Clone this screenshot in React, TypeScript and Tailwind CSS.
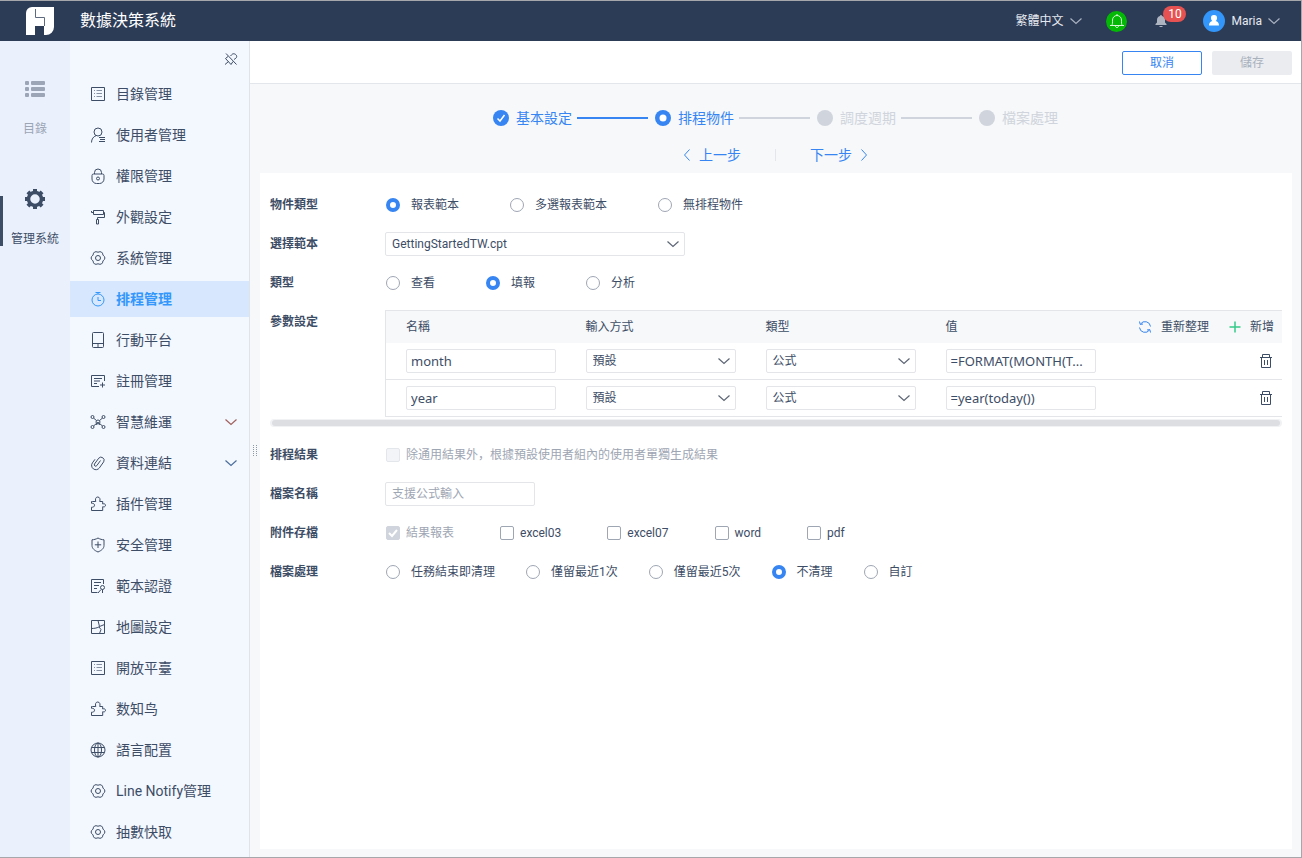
import { useState } from "react";
import type { ReactNode } from "react";
import clsx from "clsx";

type IconName =
  | "list"
  | "user"
  | "lock"
  | "roller"
  | "gear"
  | "timer"
  | "phone"
  | "register"
  | "network"
  | "clip"
  | "puzzle"
  | "shield"
  | "certificate"
  | "map"
  | "globe";

const iconShapes: Record<IconName, ReactNode> = {
  list: (
    <>
      <path d="M1.5 1.5h13v13h-13z" />
      <path opacity=".6" d="M4 4.5h1M4 7.5h1M4 10.5h1M6.5 4.5H12M6.5 7.5H12M6.5 10.5H12" />
    </>
  ),
  user: (
    <>
      <circle cx="8" cy="5" r="4" />
      <path d="M1.5 15.5c0-3.500 2-6 4.500-6.800M9 10.500h6M10 12.500h5M9 14.500h6" />
    </>
  ),
  lock: (
    <>
      <path d="M4.500 6V4.500a3.500 3.500 0 0 1 7 0V6M3.500 6h9a1.500 1.500 0 0 1 1.500 1.500V11a4.500 4.500 0 0 1-4.500 4.500h-3A4.500 4.500 0 0 1 2 11V7.500A1.500 1.500 0 0 1 3.500 6z" />
      <circle cx="8" cy="10.500" r="1.500" />
    </>
  ),
  roller: (
    <path d="M3.500 1.500h10v4h-10zM3.500 3.500h-2V2M13.500 3.500h1v5h-7v2M6.500 10.500h2v4.500h-2z" />
  ),
  gear: (
    <>
      <path
        strokeLinejoin="round"
        d="M8 2.200Q12.400.4 13 5.100 16.800 8 13 10.900 12.400 15.600 8 13.800 3.600 15.600 3 10.900-.8 8 3 5.100 3.600.4 8 2.200z"
      />
      <circle cx="8" cy="8" r="2.500" />
    </>
  ),
  timer: (
    <>
      <path d="M5.500 1.500h5M8 1.500V3M8 6v3.500h3" />
      <circle cx="8" cy="9" r="6" />
    </>
  ),
  phone: (
    <path d="M3.500 .5h9a1 1 0 0 1 1 1v13a1 1 0 0 1-1 1h-9a1 1 0 0 1-1-1v-13a1 1 0 0 1 1-1zM2.500 11.500h11M8 12v3.500" />
  ),
  register: (
    <path d="M14.500 8V2.500h-13v11H9M4 5.500h8M4 8h6M4 10.500h3M12.500 9.500v5M10 12h5" />
  ),
  network: (
    <>
      <circle cx="2.500" cy="3" r="1.500" />
      <circle cx="13.500" cy="3" r="1.500" />
      <circle cx="2.500" cy="13" r="1.500" />
      <circle cx="13.500" cy="13" r="1.500" />
      <circle cx="8" cy="8" r="2" />
      <path d="m3.500 4 3 2.600M12.500 4l-3 2.600M3.500 12l3-2.600M12.500 12l-3-2.600M6 11l2-3 2 3" />
    </>
  ),
  clip: (
    <path d="M10.500 5.500 6.800 10.600a1.400 1.400 0 0 1-2.300-1.600L8.700 3.200a3.100 3.100 0 0 1 5 3.600L9.400 12.900a4.300 4.300 0 0 1-7-5L5 4.300" />
  ),
  puzzle: (
    <path d="M2.500 5.500h3.300C5 3.500 5.500 1 7.700 1s2.800 2.500 2 4.500h3V8c1.500-.6 2.800 0 2.800 1.300s-1.300 1.900-2.800 1.400v3.800H1.500v-3.300c1.800.2 3-.5 3-2s-1.200-2-3-1.900V5.500z" />
  ),
  shield: (
    <path d="M8 1c2 1.200 4 1.700 6 1.800v5.700c0 3-2.500 5-6 6.500-3.500-1.500-6-3.500-6-6.500V2.800C4 2.700 6 2.200 8 1zM8 4.500v6.500M4.800 7.800h6.400" />
  ),
  certificate: (
    <>
      <path d="M13.500 6V1.500h-12v13h6M4 4.500h7M4 7.500h5M4 10.500h3M11 11.500l-3 3.500M12.500 11.500V15" />
      <circle cx="12.500" cy="9.500" r="2" />
    </>
  ),
  map: (
    <path d="M1.500 1.500h13v13h-13zM8 1.500l1.500 6M9.500 7.500l5-2M1.500 9.500c3 0 6-.5 8-2M9 8l2 2.500-1.500 4" />
  ),
  globe: (
    <>
      <circle cx="8" cy="8" r="7" />
      <ellipse cx="8" cy="8" rx="3.500" ry="7" />
      <path d="M8 1v14M1.500 5.500h13M1.500 10.500h13" />
    </>
  ),
};

const menuItems: { label: string; icon: IconName; expandable?: string }[] = [
  { label: "目錄管理", icon: "list" },
  { label: "使用者管理", icon: "user" },
  { label: "權限管理", icon: "lock" },
  { label: "外觀設定", icon: "roller" },
  { label: "系統管理", icon: "gear" },
  { label: "排程管理", icon: "timer" },
  { label: "行動平台", icon: "phone" },
  { label: "註冊管理", icon: "register" },
  { label: "智慧維運", icon: "network", expandable: "text-[#a0605c]" },
  { label: "資料連結", icon: "clip", expandable: "text-[#4a6f9c]" },
  { label: "插件管理", icon: "puzzle" },
  { label: "安全管理", icon: "shield" },
  { label: "範本認證", icon: "certificate" },
  { label: "地圖設定", icon: "map" },
  { label: "開放平臺", icon: "list" },
  { label: "数知鸟", icon: "puzzle" },
  { label: "語言配置", icon: "globe" },
  { label: "Line Notify管理", icon: "gear" },
  { label: "抽數快取", icon: "gear" },
];

const steps = [
  { label: "基本設定", state: "done" },
  { label: "排程物件", state: "current" },
  { label: "調度週期", state: "todo" },
  { label: "檔案處理", state: "todo" },
];

const params = [
  { name: "month", value: "=FORMAT(MONTH(T..." },
  { name: "year", value: "=year(today())" },
];

function Icon({ name }: { name: IconName }) {
  return (
    <svg className="size-4 shrink-0" viewBox="0 0 16 16" fill="none" stroke="currentColor" aria-hidden="true">
      {iconShapes[name]}
    </svg>
  );
}

function ChevronDown({ className }: { className?: string }) {
  return (
    <svg
      className={clsx("h-2 w-3 shrink-0", className)}
      viewBox="0 0 12 8"
      fill="none"
      stroke="currentColor"
      strokeWidth="1.2"
      aria-hidden="true"
    >
      <path d="M.5 1.500 6 6.500l5.500-5" />
    </svg>
  );
}

function Header() {
  return (
    <header className="flex h-10 shrink-0 items-center bg-[#2c3b56] pr-[21px] pl-[26px] text-white">
      <svg className="size-7" viewBox="0 0 28 28" aria-hidden="true">
        <path fill="#fff" d="M6 0h22v20a8 8 0 0 1-8 8h-2v-9H9v9H0V6a6 6 0 0 1 6-6z" />
        <path fill="none" stroke="#5d6a80" d="M9.500 2v8.500h9V19" />
      </svg>
      <h1 className="ml-[26px] text-base">數據決策系統</h1>
      <div className="ml-auto flex items-center text-xs text-[#e6eaf0]">
        <button type="button" className="flex items-center gap-[7px]">
          繁體中文
          <ChevronDown className="text-[#a9b2c0]" />
        </button>
        <button
          type="button"
          aria-label="客服"
          className="ml-6 flex size-[21px] items-center justify-center rounded-full bg-[#04b806]"
        >
          <svg className="size-4" viewBox="0 0 16 16" fill="none" stroke="#d9f7d9" aria-hidden="true">
            <path d="M1 12.500h14M2.500 12.500c1.200-1 1-3 1-5.500a4.500 4.500 0 0 1 9 0c0 2.500-.2 4.500 1 5.500M8 1v1.500M6.500 13c0 2 3 2 3 0" />
          </svg>
        </button>
        <button type="button" aria-label="通知" className="relative ml-7 flex size-3 items-center justify-center">
          <svg className="size-3 text-[#aeb5c1]" viewBox="0 0 12 12" fill="currentColor" aria-hidden="true">
            <path d="M6 0a1 1 0 0 1 1 1c2 .5 3 2 3 4v2.500L11.500 9v1H.5V9L2 7.500V5c0-2 1-3.500 3-4a1 1 0 0 1 1-1zM4.500 11h3v1h-3z" />
          </svg>
          <span className="absolute -top-[9px] left-2 h-4 w-[23px] rounded-full bg-[#e65251] text-center text-xs leading-4 text-white">
            10
          </span>
        </button>
        <button type="button" className="ml-9 flex items-center gap-[6px]">
          <svg className="size-[22px]" viewBox="0 0 22 22" aria-hidden="true">
            <circle cx="11" cy="11" r="11" fill="#3296fa" />
            <path
              fill="#fff"
              d="M11 5a3 3 0 0 1 3 3.200c0 1.200-.5 2.200-1.300 2.800 2 .6 3.300 1.700 3.300 4.500H6c0-2.800 1.300-3.900 3.300-4.500A3.500 3.500 0 0 1 8 8.200 3 3 0 0 1 11 5z"
            />
          </svg>
          Maria
          <ChevronDown className="text-[#a9b2c0]" />
        </button>
      </div>
    </header>
  );
}

function Rail() {
  return (
    <nav className="w-[70px] shrink-0 bg-[#eaf1fd] pt-[22px] text-xs">
      <a href="#catalog" className="flex h-[110px] flex-col items-center gap-[22px] pt-4 text-[#9ca5b5]">
        <svg className="h-5 w-5" viewBox="0 0 20 20" fill="currentColor" aria-hidden="true">
          <rect y="2" width="4" height="4" rx="1" />
          <rect y="8" width="4" height="4" rx="1" />
          <rect y="14" width="4" height="4" rx="1" />
          <rect x="6" y="2" width="14" height="4" rx="1" />
          <rect x="6" y="8" width="14" height="4" rx="1" />
          <rect x="6" y="14" width="14" height="4" rx="1" />
        </svg>
        <span className="leading-4">目錄</span>
      </a>
      <a href="#system" className="relative flex h-[110px] flex-col items-center gap-[22px] pt-4 text-[#3d4d66]">
        <span className="absolute top-[23px] left-0 h-[50px] w-[3px] bg-[#3d4d66]" />
        <svg className="size-5" viewBox="0 0 20 20" fill="none" stroke="currentColor" aria-hidden="true">
          <circle cx="10" cy="10" r="6.500" strokeWidth="3.500" />
          <path
            strokeWidth="4"
            d="M10 0v3M10 17v3M0 10h3M17 10h3M2.900 2.900 5 5M15 15l2.100 2.100M2.900 17.100 5 15M15 5l2.100-2.100"
          />
        </svg>
        <span className="leading-4">管理系統</span>
      </a>
    </nav>
  );
}

function Sidebar() {
  return (
    <nav className="w-[180px] shrink-0 border-r border-[#dfe3ea] bg-[#f3f7fe] text-sm text-[#3d4d66]">
      <div className="flex h-[35px] items-center justify-end pr-[11px]">
        <button type="button" aria-label="取消固定">
          <svg className="size-[14px]" viewBox="0 0 14 14" fill="none" stroke="currentColor" aria-hidden="true">
            <path d="m2 1.500 10.500 11M6.500 4l1.200-1.300c1.500-2 5-.5 5 1.800 0 1.500-1.500 2.200-2.700 3M4 4.500 1.500 6.500l5.500 6 2-3M4.500 9.500l-3.500 3" />
          </svg>
        </button>
      </div>
      <ul className="flex flex-col gap-[5px]">
        {menuItems.map(({ label, icon, expandable }) => (
          <li key={label}>
            <a
              href={`#${icon}`}
              className={clsx(
                "flex h-9 items-center gap-[10px] pr-3 pl-5",
                label === "排程管理" && "bg-[#d7e7fe] font-bold text-[#3397fb]"
              )}
            >
              <Icon name={icon} />
              <span>{label}</span>
              {expandable && <ChevronDown className={clsx("ml-auto", expandable)} />}
            </a>
          </li>
        ))}
      </ul>
    </nav>
  );
}

function Stepper() {
  return (
    <ol className="flex justify-center pt-6 text-sm leading-5">
      {steps.map(({ label, state }, index) => (
        <li
          key={label}
          className={clsx("flex items-center", state === "todo" ? "text-[#d0d4dc]" : "text-[#3685f2]")}
        >
          <svg className="mr-[7px] size-4" viewBox="0 0 16 16" aria-hidden="true">
            <circle cx="8" cy="8" r="8" fill="currentColor" />
            {state === "done" && <path d="m4.500 8.500 2.500 2.500 4.500-6" fill="none" stroke="#fff" strokeWidth="1.500" />}
            {state === "current" && <circle cx="8" cy="8" r="3.500" fill="#fff" />}
          </svg>
          {label}
          {index < steps.length - 1 && (
            <span
              className={clsx(
                "mr-[7px] ml-[5px] h-[2px] w-[71px]",
                state === "done" ? "bg-[#3685f2]" : "bg-[#d0d4dc]"
              )}
            />
          )}
        </li>
      ))}
    </ol>
  );
}

function StepNav() {
  return (
    <div className="flex items-center justify-center pt-[17px] pb-2 text-sm leading-5 text-[#3685f2]">
      <button type="button" className="flex items-center gap-2">
        <svg className="h-3 w-2" viewBox="0 0 8 12" fill="none" stroke="currentColor" aria-hidden="true">
          <path d="M6.500 .5 1.500 6l5 5.500" />
        </svg>
        上一步
      </button>
      <span className="mx-[34px] h-3 w-px bg-[#e3e6eb]" />
      <button type="button" className="flex items-center gap-2">
        下一步
        <svg className="h-3 w-2" viewBox="0 0 8 12" fill="none" stroke="currentColor" aria-hidden="true">
          <path d="m1.500 .5 5 5.500-5 5.500" />
        </svg>
      </button>
    </div>
  );
}

function FormRow({ label, children }: { label: string; children: ReactNode }) {
  return (
    <div role="group" aria-label={label} className="flex min-h-6">
      <span className="w-[115px] shrink-0 font-bold leading-6">{label}</span>
      <div className="flex min-w-0 flex-1 flex-wrap items-center">{children}</div>
    </div>
  );
}

function RadioGroup({
  name,
  options,
  initial,
  className,
}: {
  name: string;
  options: string[];
  initial: string;
  className: string;
}) {
  const [value, setValue] = useState(initial);

  return (
    <div className={clsx("flex flex-wrap pl-px", className)}>
      {options.map((option) => (
        <label key={option} className="flex items-center gap-[11px]">
          <input
            type="radio"
            name={name}
            checked={value === option}
            onChange={() => setValue(option)}
            className="size-[14px] appearance-none rounded-full border border-[#9ea6b3] bg-white checked:border-4 checked:border-[#3685f2]"
          />
          {option}
        </label>
      ))}
    </div>
  );
}

function Checkbox({ label, checked, disabled }: { label: string; checked?: boolean; disabled?: boolean }) {
  return (
    <label className={clsx("flex items-center gap-[6px]", disabled && "text-[#9ea6b3]")}>
      <span className="relative flex">
        <input
          type="checkbox"
          defaultChecked={checked}
          disabled={disabled}
          className="peer size-[14px] appearance-none rounded-[2px] border border-[#9ea6b3] bg-white checked:border-[#3685f2] checked:bg-[#3685f2] disabled:border-[#e3e6eb] disabled:bg-[#f2f4f7] disabled:checked:border-[#d0d4dc] disabled:checked:bg-[#d0d4dc]"
        />
        <svg
          className="pointer-events-none absolute inset-0 hidden size-[14px] peer-checked:block"
          viewBox="0 0 14 14"
          fill="none"
          stroke="#fff"
          strokeWidth="2"
          aria-hidden="true"
        >
          <path d="m3 7 3 3 5-6" />
        </svg>
      </span>
      {label}
    </label>
  );
}

function SelectBox({ label, value, className }: { label: string; value: string; className: string }) {
  return (
    <span className={clsx("relative flex items-center", className)}>
      <select
        aria-label={label}
        className="h-6 w-full appearance-none rounded-[2px] border border-[#e3e5e9] bg-white pr-6 pl-[6px]"
      >
        <option>{value}</option>
      </select>
      <ChevronDown className="pointer-events-none absolute right-[6px] text-[#5d6675]" />
    </span>
  );
}

function ParamTable() {
  const inputClass =
    "block h-6 w-[150px] rounded-[2px] border border-[#e3e5e9] bg-white px-1 font-['Noto_Sans',sans-serif] text-[13px]";

  return (
    <table className="w-full table-fixed border border-r-0 border-[#e3e5e9]">
      <thead>
        <tr className="h-8 bg-[#f6f8fa] text-left">
          <th className="w-[180px] pl-5 font-normal">名稱</th>
          <th className="w-[180px] pl-5 font-normal">輸入方式</th>
          <th className="w-[180px] pl-5 font-normal">類型</th>
          <th className="w-[180px] pl-5 font-normal">值</th>
          <th className="pr-2 font-normal">
            <div className="flex justify-end gap-5">
              <button type="button" className="flex items-center gap-[9px]">
                <svg
                  className="size-[14px] text-[#3685f2]"
                  viewBox="0 0 14 14"
                  fill="none"
                  stroke="currentColor"
                  aria-hidden="true"
                >
                  <path d="M2.500 4A5.500 5.500 0 0 1 12.500 6.500M11.500 10A5.500 5.500 0 0 1 1.500 7.500" />
                  <path d="M1.500 1.500 2.200 4.400 5 4M12.500 12.500l-.7-2.900L9 10" />
                </svg>
                重新整理
              </button>
              <button type="button" className="flex items-center gap-[9px]">
                <svg
                  className="size-3 text-[#36c98a]"
                  viewBox="0 0 12 12"
                  fill="none"
                  stroke="currentColor"
                  aria-hidden="true"
                >
                  <path d="M6 .5v11M.5 6h11" strokeWidth="1.500" />
                </svg>
                新增
              </button>
            </div>
          </th>
        </tr>
      </thead>
      <tbody>
        {params.map(({ name, value }) => (
          <tr key={name} className="h-[37px] border-b border-[#e3e5e9]">
            <td className="pl-5">
              <input aria-label="名稱" defaultValue={name} className={inputClass} />
            </td>
            <td className="pl-5">
              <SelectBox label="輸入方式" value="預設" className="w-[150px]" />
            </td>
            <td className="pl-5">
              <SelectBox label="類型" value="公式" className="w-[150px]" />
            </td>
            <td className="pl-5">
              <input aria-label="值" defaultValue={value} className={inputClass} />
            </td>
            <td className="pr-[10px]">
              <button type="button" aria-label="刪除" className="ml-auto block">
                <svg
                  className="h-[14px] w-3"
                  viewBox="0 0 12 14"
                  fill="none"
                  stroke="currentColor"
                  aria-hidden="true"
                >
                  <path d="M0 3.500h12M2.500 3.500v-3h7v3M1.500 3.500v10h9v-10M4.500 6v5M7.500 6v5" />
                </svg>
              </button>
            </td>
          </tr>
        ))}
      </tbody>
    </table>
  );
}

function ScheduleForm() {
  return (
    <form className="flex-1 bg-white px-[10px] pt-5 pb-6 text-xs leading-4">
      <div className="flex flex-col gap-[15px]">
        <FormRow label="物件類型">
          <RadioGroup
            name="objectType"
            options={["報表範本", "多選報表範本", "無排程物件"]}
            initial="報表範本"
            className="gap-[51px]"
          />
        </FormRow>
        <FormRow label="選擇範本">
          <SelectBox label="選擇範本" value="GettingStartedTW.cpt" className="w-[300px]" />
        </FormRow>
        <FormRow label="類型">
          <RadioGroup name="viewType" options={["查看", "填報", "分析"]} initial="填報" className="gap-[51px]" />
        </FormRow>
        <div className="pb-px">
          <FormRow label="參數設定">
            <ParamTable />
          </FormRow>
          <div className="mt-[2px] flex h-2 items-center rounded-full bg-[#f1f2f4] px-[2px]">
            <div className="h-[6px] flex-1 rounded-full bg-[#dcdee2]" />
          </div>
        </div>
        <FormRow label="排程結果">
          <div className="pl-px">
            <Checkbox label="除通用結果外，根據預設使用者組內的使用者單獨生成結果" disabled />
          </div>
        </FormRow>
        <FormRow label="檔案名稱">
          <input
            aria-label="檔案名稱"
            placeholder="支援公式輸入"
            className="h-6 w-[150px] rounded-[2px] border border-[#e3e5e9] px-[6px] placeholder:text-[#9ea6b3]"
          />
        </FormRow>
        <FormRow label="附件存檔">
          <div className="flex flex-wrap gap-[46px] pl-px">
            <Checkbox label="結果報表" checked disabled />
            <Checkbox label="excel03" />
            <Checkbox label="excel07" />
            <Checkbox label="word" />
            <Checkbox label="pdf" />
          </div>
        </FormRow>
        <FormRow label="檔案處理">
          <RadioGroup
            name="cleanup"
            options={["任務結束即清理", "僅留最近1次", "僅留最近5次", "不清理", "自訂"]}
            initial="不清理"
            className="gap-[31px]"
          />
        </FormRow>
      </div>
    </form>
  );
}

export default function App() {
  return (
    <div className="flex min-h-screen flex-col border-t border-r border-b border-[#a5a7aa] bg-[#f6f8fa] font-[Roboto,'Noto_Sans_CJK_SC',sans-serif] text-[#3d4d66]">
      <Header />
      <div className="flex flex-1">
        <Rail />
        <Sidebar />
        <main className="flex min-w-0 flex-1 flex-col">
          <div className="flex h-[43px] items-end justify-end gap-[10px] border-b border-[#e3e6eb] bg-white px-[9px] pb-2 text-xs">
            <button type="button" className="h-6 w-20 rounded-[2px] border border-[#3685f2] text-[#3685f2]">
              取消
            </button>
            <button type="button" disabled className="h-6 w-20 rounded-[2px] bg-[#eaecf0] text-[#a9b1bd]">
              儲存
            </button>
          </div>
          <Stepper />
          <StepNav />
          <div className="flex flex-1 pr-[9px] pb-2">
            <div className="flex w-[10px] shrink-0 items-center justify-center pb-[121px]">
              <svg className="h-3 w-1" viewBox="0 0 4 12" fill="#8d97a8" aria-hidden="true">
                <path d="M0 0h1v1H0zM3 0h1v1H3zM0 2h1v1H0zM3 2h1v1H3zM0 4h1v1H0zM3 4h1v1H3zM0 6h1v1H0zM3 6h1v1H3zM0 8h1v1H0zM3 8h1v1H3zM0 10h1v1H0zM3 10h1v1H3z" />
              </svg>
            </div>
            <ScheduleForm />
          </div>
        </main>
      </div>
    </div>
  );
}
